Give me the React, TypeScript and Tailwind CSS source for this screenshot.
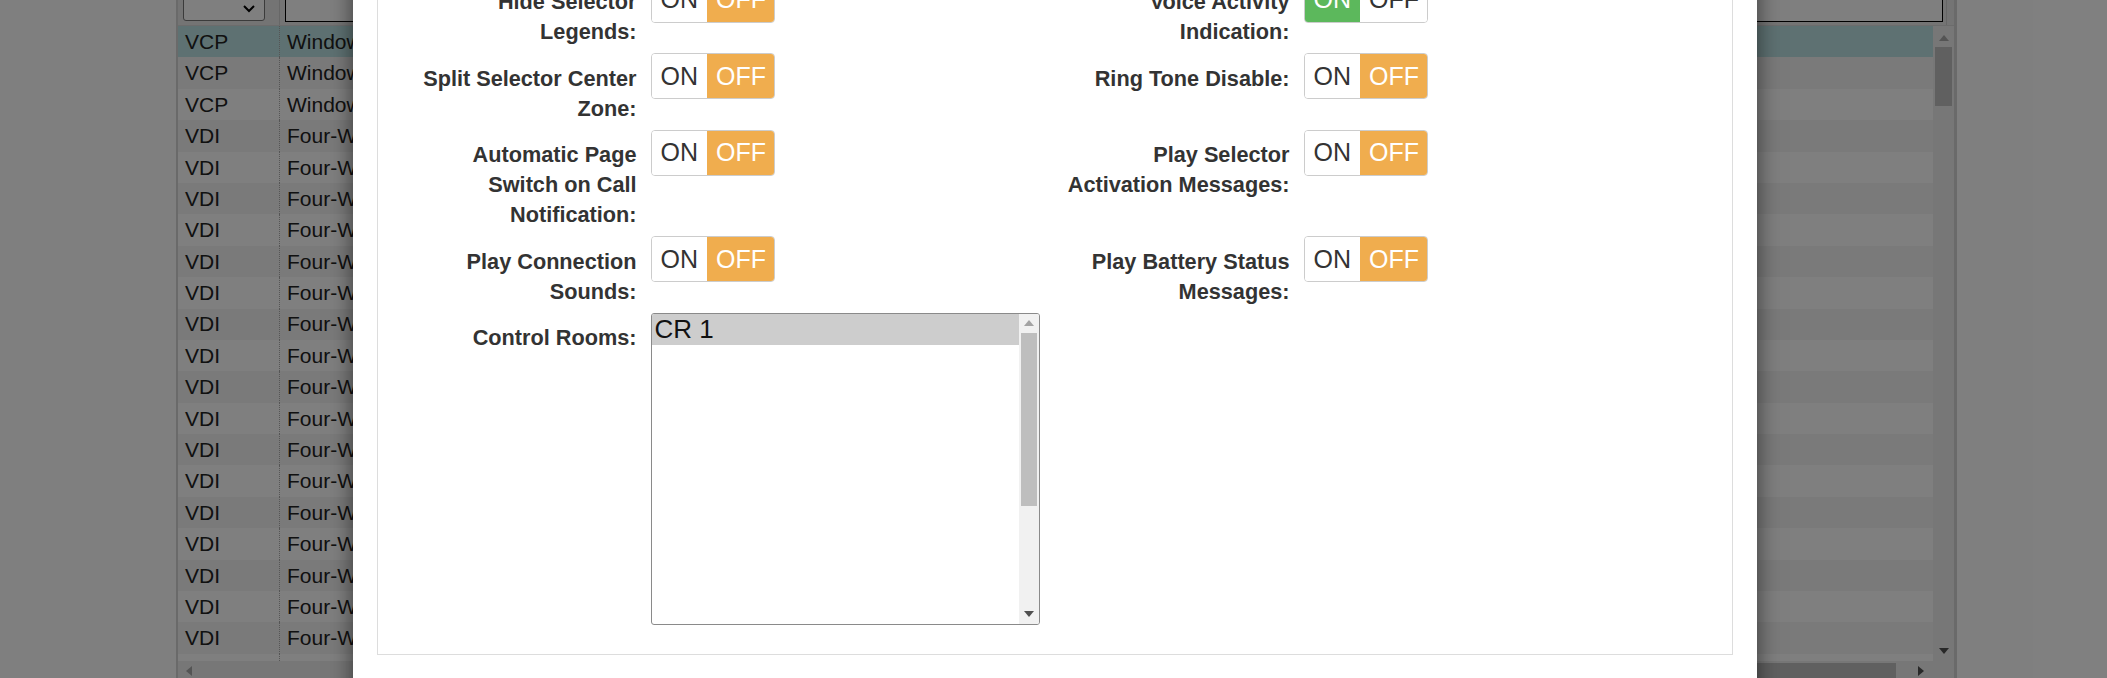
import React from "react";

const FONT = "font-['Liberation_Sans',Arial,Helvetica,sans-serif]";

const ROWS: [string, string][] = [
  ["VCP", "Windows Client"],
  ["VCP", "Windows Client"],
  ["VCP", "Windows Client"],
  ...Array.from({ length: 17 }, () => ["VDI", "Four-Wire Interface"] as [string, string]),
];

function Arrow({ dir, color, size = 10 }: { dir: "up" | "down" | "left" | "right"; color: string; size?: number }) {
  const pts = {
    up: "0,8 5,2 10,8",
    down: "0,2 10,2 5,8",
    left: "8,0 8,10 2,5",
    right: "2,0 2,10 8,5",
  }[dir];
  return (
    <svg width={size} height={size} viewBox="0 0 10 10" className="block">
      <polygon points={pts} fill={color} />
    </svg>
  );
}

function Toggle({ on }: { on: boolean }) {
  return (
    <div className="flex h-[46px] w-fit justify-self-start rounded-[4px] border-[1.5px] border-[#cccccc] overflow-hidden text-[25px] leading-none">
      <span className={`flex items-center px-[9px] ${on ? "bg-[#5cb85c] text-white" : "bg-white text-[#333]"}`}>ON</span>
      <span className={`flex items-center pl-[9px] pr-[8px] ${on ? "bg-white text-[#333]" : "bg-[#f0ad4e] text-white"}`}>OFF</span>
    </div>
  );
}

function Label({ children }: { children: React.ReactNode }) {
  return <div className="pr-[14px] pt-[10.5px] text-right font-bold text-[21.7px] leading-[30px] text-[#333]">{children}</div>;
}

function ListBox() {
  return (
    <div className="flex w-[389px] h-[312px] justify-self-start rounded-[3px] border-[1.5px] border-[#8a8a8a] bg-white overflow-hidden">
      <div className="flex-1">
        <div className="h-[31px] bg-[#cdcdcd] pl-[3px] text-[26px] leading-[31px] text-[#111]">CR 1</div>
      </div>
      <div className="flex w-[20px] flex-col bg-[#f1f1f1]">
        <div className="flex h-[19px] items-center justify-center"><Arrow dir="up" color="#a3a3a3" /></div>
        <div className="mx-[2px] h-[173px] bg-[#bebebe]" />
        <div className="flex-1" />
        <div className="flex h-[19px] items-center justify-center"><Arrow dir="down" color="#505050" /></div>
      </div>
    </div>
  );
}

function Grid() {
  return (
    <div className="ml-[176px] w-[1781px] border-l-2 border-r-[3px] border-[#d4d4d4] text-[21px] text-[#222]">
      <div className="flex h-[26px] border-b border-[#d8d8d8] bg-[#e8e8e8]">
        <div className="w-[102px] border-r border-[#cfcfcf] pl-[5px]">
          <div className="-mt-[4px] flex h-[25px] w-[82px] items-center justify-end rounded-[3px] border border-[#767676] bg-white pr-[8px]">
            <svg width="14" height="10" viewBox="0 0 14 10"><path d="M2 2l5 5 5-5" fill="none" stroke="#000" strokeWidth="2" /></svg>
          </div>
        </div>
        <div className="flex-1 pl-[5px] pr-[3px]">
          <div className="-mt-[4px] h-[26px] border-[1.5px] border-black bg-white" />
        </div>
        <div className="w-[8px] border-l border-[#cfcfcf]" />
      </div>
      <div className="flex h-[635px]">
        <div className="flex-1 overflow-hidden">
          {ROWS.map(([a, b], i) => (
            <div
              key={i}
              className={`flex h-[31.4px] items-center ${i === 0 ? "bg-[#bce2e4]" : i % 2 ? "bg-[#f5f5f5]" : "bg-white"}`}
            >
              <div className="flex h-full w-[102px] items-center border-r border-dotted border-[#aaaaaa] pl-[7px]">{a}</div>
              <div className="pl-[7px]">{b}</div>
            </div>
          ))}
          <div className="flex h-[11px]">
            <div className="w-[102px] border-r border-dotted border-[#aaaaaa]" />
          </div>
        </div>
        <div className="flex w-[21px] flex-col bg-[#efefef]">
          <div className="flex h-[21px] items-center justify-center pt-[2px]"><Arrow dir="up" color="#a8a8a8" /></div>
          <div className="mx-[2px] h-[59px] bg-[#c1c1c1]" />
          <div className="flex-1" />
          <div className="flex h-[21px] items-center justify-center"><Arrow dir="down" color="#505050" /></div>
        </div>
      </div>
      <div className="flex h-[20px] bg-[#efefef]">
        <div className="flex w-[22px] items-center justify-center"><Arrow dir="left" color="#a8a8a8" /></div>
        <div className="w-[220px]" />
        <div className="my-[2px] flex-1 bg-[#c1c1c1]" />
        <div className="w-[14px]" />
        <div className="flex w-[22px] items-center justify-center"><Arrow dir="right" color="#505050" /></div>
        <div className="w-[22px]" />
      </div>
    </div>
  );
}

export default function App() {
  return (
    <div className={`relative h-[678px] w-[2107px] overflow-hidden bg-white ${FONT}`}>
      <Grid />
      <div className="absolute inset-0 bg-black/50" />
      <div className="absolute left-[353px] top-[-80px] w-[1404px] h-[820px] bg-white p-[24px] shadow-[0_6px_22px_rgba(0,0,0,0.55)]">
        <div className="border-[1.5px] border-[#dddddd] pl-[28.5px] pt-[31.5px] pb-[29.5px]">
          <div className="flex flex-col gap-[6px]">
            <div className="grid grid-cols-[244px_409px_244px_1fr] items-start">
              <Label>Hide Selector Legends:</Label>
              <Toggle on={false} />
              <Label>Voice Activity Indication:</Label>
              <Toggle on />
            </div>
            <div className="grid grid-cols-[244px_409px_244px_1fr] items-start">
              <Label>Split Selector Center Zone:</Label>
              <Toggle on={false} />
              <Label>Ring Tone Disable:</Label>
              <Toggle on={false} />
            </div>
            <div className="grid grid-cols-[244px_409px_244px_1fr] items-start">
              <Label>Automatic Page Switch on Call Notification:</Label>
              <Toggle on={false} />
              <Label>Play Selector Activation Messages:</Label>
              <Toggle on={false} />
            </div>
            <div className="grid grid-cols-[244px_409px_244px_1fr] items-start">
              <Label>Play Connection Sounds:</Label>
              <Toggle on={false} />
              <Label>Play Battery Status Messages:</Label>
              <Toggle on={false} />
            </div>
            <div className="grid grid-cols-[244px_409px_244px_1fr] items-start">
              <Label>Control Rooms:</Label>
              <ListBox />
              <div />
              <div />
            </div>
          </div>
        </div>
      </div>
    </div>
  );
}
